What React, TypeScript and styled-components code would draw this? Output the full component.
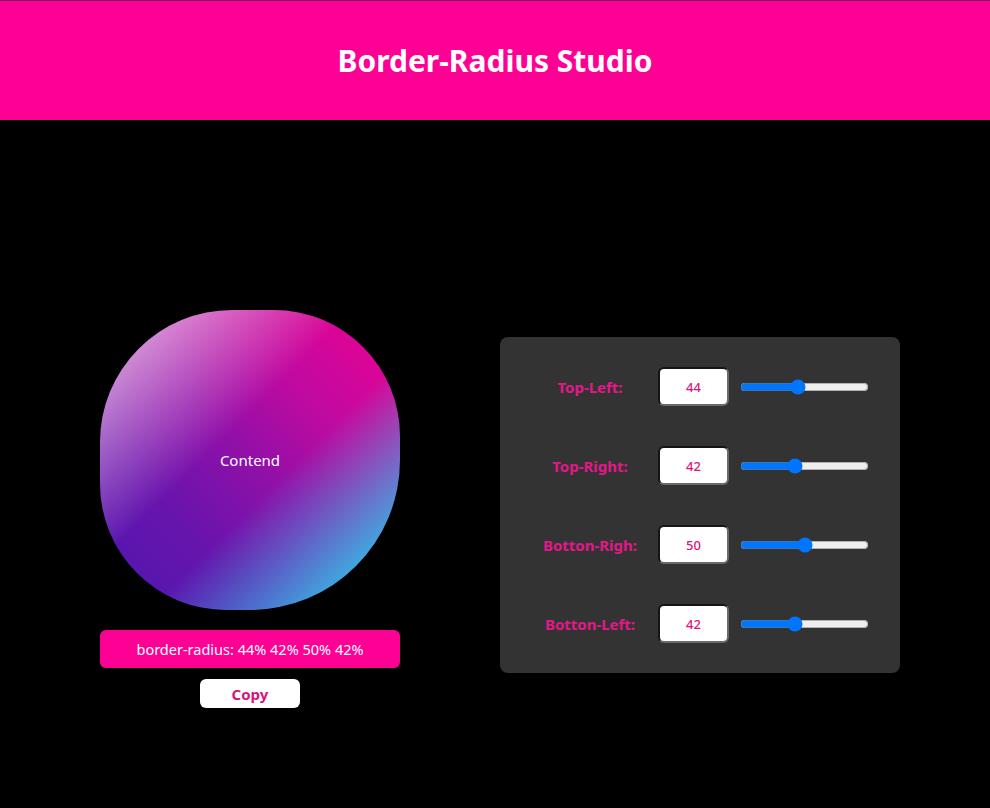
import React, { useState } from "react";
import styled, { createGlobalStyle } from "styled-components";

const Global = createGlobalStyle`
  html, body { margin: 0; padding: 0; background: #000; }
  body { font-family: "Noto Sans", "DejaVu Sans", sans-serif; }
  * { box-sizing: border-box; }
`;

const Header = styled.header`
  height: 120px;
  background: #ff0095;
  border-top: 1px solid #7a1f5c;
  display: flex;
  align-items: center;
  justify-content: center;
`;

const Title = styled.h1`
  margin: 0;
  color: #fff;
  font-size: 30px;
  font-weight: 700;
`;

const Main = styled.main`
  display: flex;
  align-items: center;
  gap: 100px;
  padding: 190px 0 100px 100px;
`;

const LeftColumn = styled.div`
  display: flex;
  flex-direction: column;
  align-items: center;
  width: 300px;
`;

const Shape = styled.div`
  width: 300px;
  height: 300px;
  display: flex;
  align-items: center;
  justify-content: center;
  color: #fff;
  font-size: 15px;
  background:
    linear-gradient(135deg, rgba(240, 200, 235, 0.95) 0%, rgba(240, 200, 235, 0) 42%, rgba(60, 180, 230, 0) 58%, rgba(58, 180, 228, 1) 88%),
    linear-gradient(45deg, #4a18b0 0%, #6a14ac 30%, #9010a8 50%, #c00aa0 70%, #f0008f 100%);
`;

const CodeBox = styled.div`
  margin-top: 20px;
  width: 300px;
  height: 38px;
  border-radius: 6px;
  background: #ff0095;
  color: #fff;
  font-size: 14.5px;
  display: flex;
  align-items: center;
  justify-content: center;
`;

const CopyButton = styled.button`
  margin-top: 11px;
  width: 100px;
  height: 29px;
  border: none;
  border-radius: 6px;
  background: #fff;
  color: #d8147c;
  font-family: inherit;
  font-size: 15px;
  font-weight: 700;
  cursor: pointer;
`;

const Panel = styled.div`
  width: 400px;
  background: #333;
  border-radius: 8px;
  padding: 30px 22px;
  margin-bottom: 8px;
  display: flex;
  flex-direction: column;
  gap: 40px;
`;

const Row = styled.div`
  display: flex;
  align-items: center;
  height: 39px;
`;

const Label = styled.label`
  width: 136px;
  text-align: center;
  color: #e3178a;
  font-size: 15px;
  font-weight: 700;
`;

const NumberInput = styled.input`
  width: 71px;
  height: 39px;
  border-radius: 6px;
  border: 2px inset #6a6a6a;
  background: #fff;
  color: #d8147c;
  font-family: inherit;
  font-size: 13px;
  font-weight: 500;
  text-align: center;
  outline: none;
  -moz-appearance: textfield;
  &::-webkit-outer-spin-button,
  &::-webkit-inner-spin-button {
    -webkit-appearance: none;
    margin: 0;
  }
`;

const Slider = styled.input`
  margin: 0 0 0 11px;
  width: 129px;
`;

const corners = [
  { key: "tl", label: "Top-Left:", value: 44 },
  { key: "tr", label: "Top-Right:", value: 42 },
  { key: "br", label: "Botton-Righ:", value: 50 },
  { key: "bl", label: "Botton-Left:", value: 42 },
];

export default function App() {
  const [values, setValues] = useState<number[]>(corners.map((c) => c.value));
  const radius = values.map((v) => `${v}%`).join(" ");
  const set = (i: number, v: number) =>
    setValues((prev) => prev.map((p, j) => (j === i ? v : p)));

  return (
    <>
      <Global />
      <Header>
        <Title>Border-Radius Studio</Title>
      </Header>
      <Main>
        <LeftColumn>
          <Shape style={{ borderRadius: radius }}>Contend</Shape>
          <CodeBox>border-radius: {radius}</CodeBox>
          <CopyButton>Copy</CopyButton>
        </LeftColumn>
        <Panel>
          {corners.map((c, i) => (
            <Row key={c.key}>
              <Label>{c.label}</Label>
              <NumberInput
                type="number"
                value={values[i]}
                onChange={(e) => set(i, Number(e.target.value))}
              />
              <Slider
                type="range"
                min={0}
                max={100}
                value={values[i]}
                onChange={(e) => set(i, Number(e.target.value))}
              />
            </Row>
          ))}
        </Panel>
      </Main>
    </>
  );
}
